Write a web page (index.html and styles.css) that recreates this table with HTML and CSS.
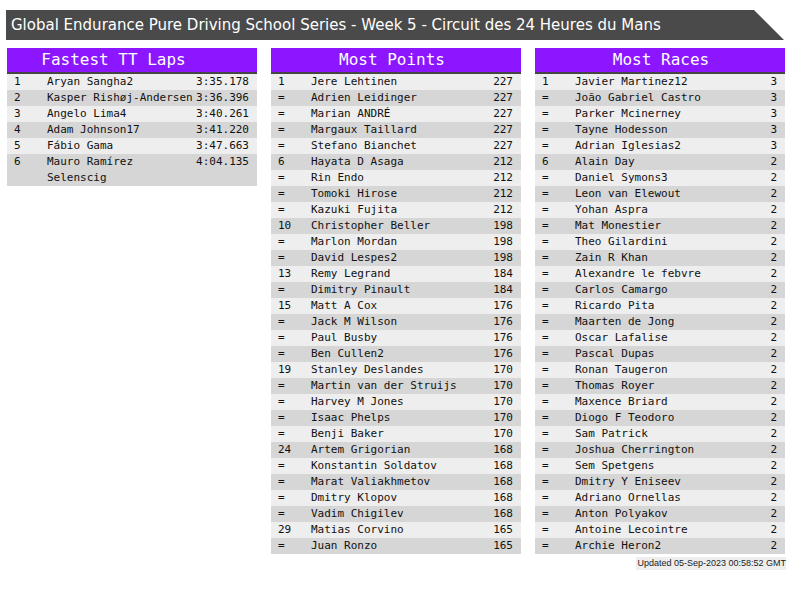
FILE: index.html
```html
<!DOCTYPE html>
<html>
<head>
<meta charset="utf-8">
<link rel="stylesheet" href="styles.css">
</head>
<body>
<div class="title">Global Endurance Pure Driving School Series - Week 5 - Circuit des 24 Heures du Mans</div>
<div class="boards">
  <div class="board">
    <div class="head head-laps">Fastest TT Laps</div>
    <div class="row"><span>1</span><span class="name">Aryan Sangha2</span><span>3:35.178</span></div>
    <div class="row"><span>2</span><span class="name">Kasper Rishøj-Andersen</span><span>3:36.396</span></div>
    <div class="row"><span>3</span><span class="name">Angelo Lima4</span><span>3:40.261</span></div>
    <div class="row"><span>4</span><span class="name">Adam Johnson17</span><span>3:41.220</span></div>
    <div class="row"><span>5</span><span class="name">Fábio Gama</span><span>3:47.663</span></div>
    <div class="row"><span>6</span><span class="name">Mauro Ramírez Selenscig</span><span>4:04.135</span></div>
  </div>
  <div class="board">
    <div class="head head-points">Most Points</div>
    <div class="row"><span>1</span><span class="name">Jere Lehtinen</span><span>227</span></div>
    <div class="row"><span>=</span><span class="name">Adrien Leidinger</span><span>227</span></div>
    <div class="row"><span>=</span><span class="name">Marian ANDRÉ</span><span>227</span></div>
    <div class="row"><span>=</span><span class="name">Margaux Taillard</span><span>227</span></div>
    <div class="row"><span>=</span><span class="name">Stefano Bianchet</span><span>227</span></div>
    <div class="row"><span>6</span><span class="name">Hayata D Asaga</span><span>212</span></div>
    <div class="row"><span>=</span><span class="name">Rin Endo</span><span>212</span></div>
    <div class="row"><span>=</span><span class="name">Tomoki Hirose</span><span>212</span></div>
    <div class="row"><span>=</span><span class="name">Kazuki Fujita</span><span>212</span></div>
    <div class="row"><span>10</span><span class="name">Christopher Beller</span><span>198</span></div>
    <div class="row"><span>=</span><span class="name">Marlon Mordan</span><span>198</span></div>
    <div class="row"><span>=</span><span class="name">David Lespes2</span><span>198</span></div>
    <div class="row"><span>13</span><span class="name">Remy Legrand</span><span>184</span></div>
    <div class="row"><span>=</span><span class="name">Dimitry Pinault</span><span>184</span></div>
    <div class="row"><span>15</span><span class="name">Matt A Cox</span><span>176</span></div>
    <div class="row"><span>=</span><span class="name">Jack M Wilson</span><span>176</span></div>
    <div class="row"><span>=</span><span class="name">Paul Busby</span><span>176</span></div>
    <div class="row"><span>=</span><span class="name">Ben Cullen2</span><span>176</span></div>
    <div class="row"><span>19</span><span class="name">Stanley Deslandes</span><span>170</span></div>
    <div class="row"><span>=</span><span class="name">Martin van der Struijs</span><span>170</span></div>
    <div class="row"><span>=</span><span class="name">Harvey M Jones</span><span>170</span></div>
    <div class="row"><span>=</span><span class="name">Isaac Phelps</span><span>170</span></div>
    <div class="row"><span>=</span><span class="name">Benji Baker</span><span>170</span></div>
    <div class="row"><span>24</span><span class="name">Artem Grigorian</span><span>168</span></div>
    <div class="row"><span>=</span><span class="name">Konstantin Soldatov</span><span>168</span></div>
    <div class="row"><span>=</span><span class="name">Marat Valiakhmetov</span><span>168</span></div>
    <div class="row"><span>=</span><span class="name">Dmitry Klopov</span><span>168</span></div>
    <div class="row"><span>=</span><span class="name">Vadim Chigilev</span><span>168</span></div>
    <div class="row"><span>29</span><span class="name">Matias Corvino</span><span>165</span></div>
    <div class="row"><span>=</span><span class="name">Juan Ronzo</span><span>165</span></div>
  </div>
  <div class="board">
    <div class="head head-races">Most Races</div>
    <div class="row"><span>1</span><span class="name">Javier Martinez12</span><span>3</span></div>
    <div class="row"><span>=</span><span class="name">João Gabriel Castro</span><span>3</span></div>
    <div class="row"><span>=</span><span class="name">Parker Mcinerney</span><span>3</span></div>
    <div class="row"><span>=</span><span class="name">Tayne Hodesson</span><span>3</span></div>
    <div class="row"><span>=</span><span class="name">Adrian Iglesias2</span><span>3</span></div>
    <div class="row"><span>6</span><span class="name">Alain Day</span><span>2</span></div>
    <div class="row"><span>=</span><span class="name">Daniel Symons3</span><span>2</span></div>
    <div class="row"><span>=</span><span class="name">Leon van Elewout</span><span>2</span></div>
    <div class="row"><span>=</span><span class="name">Yohan Aspra</span><span>2</span></div>
    <div class="row"><span>=</span><span class="name">Mat Monestier</span><span>2</span></div>
    <div class="row"><span>=</span><span class="name">Theo Gilardini</span><span>2</span></div>
    <div class="row"><span>=</span><span class="name">Zain R Khan</span><span>2</span></div>
    <div class="row"><span>=</span><span class="name">Alexandre le febvre</span><span>2</span></div>
    <div class="row"><span>=</span><span class="name">Carlos Camargo</span><span>2</span></div>
    <div class="row"><span>=</span><span class="name">Ricardo Pita</span><span>2</span></div>
    <div class="row"><span>=</span><span class="name">Maarten de Jong</span><span>2</span></div>
    <div class="row"><span>=</span><span class="name">Oscar Lafalise</span><span>2</span></div>
    <div class="row"><span>=</span><span class="name">Pascal Dupas</span><span>2</span></div>
    <div class="row"><span>=</span><span class="name">Ronan Taugeron</span><span>2</span></div>
    <div class="row"><span>=</span><span class="name">Thomas Royer</span><span>2</span></div>
    <div class="row"><span>=</span><span class="name">Maxence Briard</span><span>2</span></div>
    <div class="row"><span>=</span><span class="name">Diogo F Teodoro</span><span>2</span></div>
    <div class="row"><span>=</span><span class="name">Sam Patrick</span><span>2</span></div>
    <div class="row"><span>=</span><span class="name">Joshua Cherrington</span><span>2</span></div>
    <div class="row"><span>=</span><span class="name">Sem Spetgens</span><span>2</span></div>
    <div class="row"><span>=</span><span class="name">Dmitry Y Eniseev</span><span>2</span></div>
    <div class="row"><span>=</span><span class="name">Adriano Ornellas</span><span>2</span></div>
    <div class="row"><span>=</span><span class="name">Anton Polyakov</span><span>2</span></div>
    <div class="row"><span>=</span><span class="name">Antoine Lecointre</span><span>2</span></div>
    <div class="row"><span>=</span><span class="name">Archie Heron2</span><span>2</span></div>
  </div>
</div>
<div class="footer"><span class="updated">Updated 05-Sep-2023 00:58:52 GMT</span></div>
</body>
</html>
```
FILE: styles.css
```css
html, body {
  margin: 0;
  padding: 0;
  background: #ffffff;
}
.title {
  margin: 10px 0 0 6px;
  width: 773px;
  height: 30px;
  line-height: 30px;
  padding-left: 5px;
  background: #4a4a4a;
  color: #ffffff;
  font-family: "DejaVu Sans", sans-serif;
  font-size: 15px;
  white-space: nowrap;
  clip-path: polygon(0 0, 748px 0, 778px 30px, 0 30px);
}
.boards {
  display: flex;
  align-items: flex-start;
  gap: 14px;
  margin: 8px 0 0 7px;
}
.board {
  width: 250px;
  font-family: "DejaVu Sans Mono", monospace;
  color: #111111;
}
.head {
  height: 24px;
  line-height: 24px;
  background: #8b16ff;
  color: #ffffff;
  font-size: 16px;
  text-align: center;
  border-bottom: 2px solid #454545;
}
.head-laps {
  padding-right: 37px;
}
.head-points {
  padding-right: 8px;
}
.head-races {
  padding-left: 2px;
}
.row {
  display: grid;
  grid-template-columns: 33px 1fr auto;
  padding: 0 8px 0 7px;
  font-size: 11px;
  line-height: 16px;
  background: #eeeeee;
}
.row:nth-child(odd) {
  background: #d6d6d6;
}
.name {
  padding-right: 3px;
}
.footer {
  display: flex;
  justify-content: flex-end;
  width: 786px;
  margin-top: 3px;
}
.updated {
  background: #eeeeee;
  font-family: "Liberation Sans", Arial, sans-serif;
  font-size: 9px;
  line-height: 13px;
  padding: 0 0 0 1px;
  color: #222222;
}
```
